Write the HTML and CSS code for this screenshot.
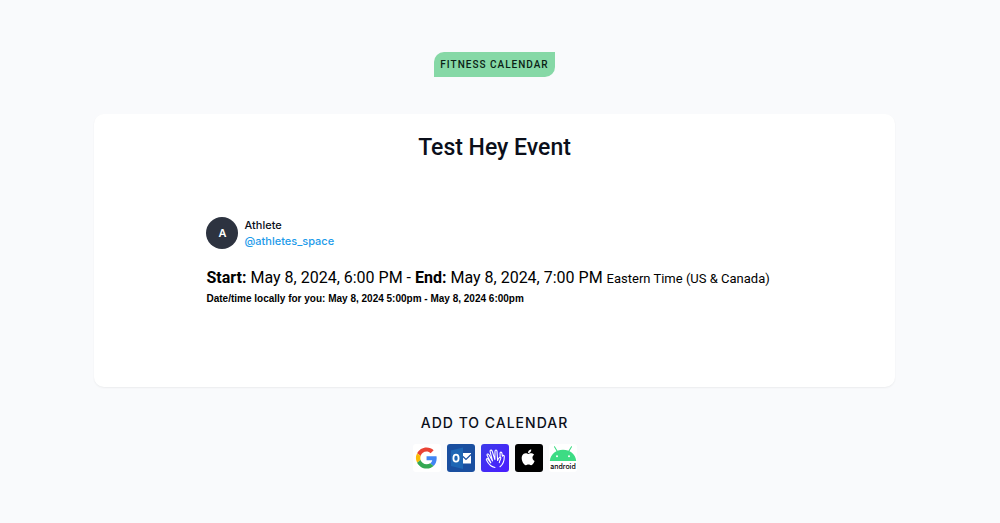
FILE: index.html
```html
<!DOCTYPE html>
<html lang="en">
<head>
<meta charset="utf-8">
<meta name="viewport" content="width=device-width, initial-scale=1">
<title>Test Hey Event</title>
<link rel="stylesheet" href="styles.css">
</head>
<body>
<main class="page">
  <a class="badge" href="#">FITNESS CALENDAR</a>
  <article class="card">
    <h1 class="title">Test Hey Event</h1>
    <div class="details">
      <div class="host">
        <span class="avatar">A</span>
        <div class="host-text">
          <span>Athlete</span>
          <a class="handle" href="#">@athletes_space</a>
        </div>
      </div>
      <p class="when"><strong>Start:</strong> May 8, 2024, 6:00 PM - <strong>End:</strong> May 8, 2024, 7:00 PM <span class="zone">Eastern Time (US &amp; Canada)</span></p>
      <p class="local">Date/time locally for you: May 8, 2024 5:00pm - May 8, 2024 6:00pm</p>
    </div>
  </article>
  <section class="add">
    <h2 class="add-title">ADD TO CALENDAR</h2>
    <div class="icons">
      <a class="icon" href="#" aria-label="Google">
        <svg viewBox="0 0 28 28"><rect width="28" height="28" fill="#fff"/><g transform="translate(3 3.400) scale(.44)"><path fill="#EA4335" d="M24 9.500c3.500 0 6.700 1.200 9.200 3.600l6.900-6.900C35.900 2.400 30.500 0 24 0 14.600 0 6.500 5.400 2.600 13.200l8 6.200C12.400 13.700 17.700 9.500 24 9.500z"/><path fill="#4285F4" d="M47 24.500c0-1.600-.2-3.100-.4-4.500H24v9h12.900c-.6 3-2.200 5.500-4.700 7.200l7.700 6C44.400 38 47 31.800 47 24.500z"/><path fill="#FBBC05" d="M10.500 28.600a14.500 14.500 0 0 1 0-9.200l-8-6.200a24 24 0 0 0 0 21.600z"/><path fill="#34A853" d="M24 48c6.500 0 11.900-2.100 15.900-5.800l-7.700-6c-2.200 1.500-4.900 2.300-8.200 2.300-6.300 0-11.600-4.200-13.500-9.900l-8 6.200C6.500 42.600 14.600 48 24 48z"/></g></svg>
      </a>
      <a class="icon" href="#" aria-label="Outlook">
        <svg viewBox="0 0 28 28"><rect width="28" height="28" fill="#1a4fa0"/><path fill="#1e66b4" d="M4 6.500 16 3.500v21.500L4 22z"/><path fill="#fff" d="M16 9h8v10.500h-8z"/><path d="m16 12.500 3 3 5-5" fill="none" stroke="#1a4fa0" stroke-width="1.200"/><ellipse cx="9" cy="14.200" rx="2.600" ry="3.500" fill="none" stroke="#fff" stroke-width="1.800"/></svg>
      </a>
      <a class="icon" href="#" aria-label="HEY">
        <svg viewBox="0 0 28 28"><defs><linearGradient id="hey" x1="0" y1="0" x2="1" y2="1"><stop offset="0" stop-color="#3d3bea"/><stop offset="1" stop-color="#4a1cff"/></linearGradient></defs><rect width="28" height="28" fill="url(#hey)"/><path fill="none" stroke="#fff" stroke-width="1.100" stroke-linecap="round" stroke-linejoin="round" d="M14 23.500c-4-.8-6.700-3.600-8.500-7.500-.6-1.400.9-1.900 1.700-.7l2.600 3.500-3.600-7.200c-.7-1.600 1-2.300 1.800-.8l3.500 6.100-2.400-9.300c-.3-1.700 1.500-2 2.100-.4l2.700 8.400.1-8.300c.1-1.700 1.900-1.600 2-.1l.6 9.300c.7-2.300 2.300-3.900 3.100-3.100.8.9-.9 2.400-1.400 5.200M19.200 12.500l-.2-3.200c.1-1.500 1.700-1.500 1.900-.1l.5 3.100c.3-1.300 1.900-1.300 1.900.2 0 4.500-1 7.800-4.300 10.200"/></svg>
      </a>
      <a class="icon" href="#" aria-label="Apple">
        <svg viewBox="0 0 28 28"><rect width="28" height="28" fill="#000"/><path transform="translate(5.500 5) scale(.7)" fill="#fff" d="M17.050 12.540c-.03-2.850 2.330-4.220 2.430-4.290-1.320-1.940-3.380-2.200-4.120-2.230-1.750-.18-3.420 1.030-4.310 1.030-.89 0-2.260-1.010-3.720-.98-1.910.03-3.670 1.110-4.660 2.820-1.990 3.450-.51 8.550 1.430 11.350.95 1.370 2.080 2.910 3.560 2.850 1.430-.06 1.970-.92 3.700-.92 1.720 0 2.210.92 3.720.89 1.540-.03 2.510-1.390 3.450-2.770 1.090-1.590 1.540-3.130 1.560-3.210-.03-.01-2.990-1.150-3.040-4.540zM14.200 4.170c.79-.96 1.320-2.280 1.180-3.610-1.140.05-2.520.76-3.330 1.710-.73.850-1.370 2.200-1.200 3.500 1.270.1 2.570-.65 3.350-1.600z"/></svg>
      </a>
      <a class="icon" href="#" aria-label="Android">
        <svg viewBox="0 0 28 28"><rect width="28" height="28" fill="#fff"/><path d="m5.500 2.800 3 5M22.500 2.800l-3 5" stroke="#3ddc84" stroke-width="1.100" stroke-linecap="round"/><path fill="#3ddc84" d="M.8 17C1.500 10.200 7 5.800 14 5.800S26.500 10.200 27.200 17z"/><circle cx="8" cy="12.300" r="1" fill="#fff"/><circle cx="20" cy="12.300" r="1" fill="#fff"/><text class="wordmark" x="14" y="25" text-anchor="middle">android</text></svg>
      </a>
    </div>
  </section>
</main>
</body>
</html>
```
FILE: styles.css
```css
* { box-sizing: border-box; }
body {
  margin: 0;
  background: #f9fafc;
  color: #0b0f1a;
  font-family: Inter, "Liberation Sans", sans-serif;
}
h1, h2, p { margin: 0; }
a { text-decoration: none; color: inherit; }
.page {
  display: flex;
  flex-direction: column;
  align-items: center;
  padding: 52px 11px 50px 0;
}
.badge {
  padding: 0 6px;
  border-radius: 10px 0;
  background: #86d8a6;
  color: #0b1f16;
  font-family: Roboto, "Liberation Sans", sans-serif;
  font-size: 10px;
  font-weight: 500;
  line-height: 25px;
  letter-spacing: 1px;
}
.card {
  width: 81%;
  margin-top: 37px;
  padding: 16px 16px 80px;
  border-radius: 10px;
  background: #fff;
  box-shadow: 0 1px 2px rgba(0, 0, 0, .06);
}
.title {
  font-family: Roboto, "Liberation Sans", sans-serif;
  font-size: 23px;
  font-weight: 500;
  line-height: 36px;
  text-align: center;
}
.details { width: 576px; max-width: 100%; margin: 51px auto 0; }
.host { display: flex; align-items: center; gap: 6px; }
.avatar {
  width: 32px;
  height: 32px;
  border-radius: 50%;
  background: #2d3340;
  color: #fff;
  font-size: 11px;
  font-weight: 600;
  line-height: 32px;
  text-align: center;
}
.host-text {
  display: flex;
  flex-direction: column;
  font-size: 11px;
  font-weight: 500;
  line-height: 16px;
}
.handle { color: #1d9bea; }
.when {
  margin-top: 17px;
  color: #000;
  font-family: Roboto, "Liberation Sans", sans-serif;
  font-size: 16px;
  line-height: 24px;
}
.when strong { font-weight: 700; }
.zone { font-size: 13px; }
.local {
  color: #000;
  font-family: "Liberation Sans", sans-serif;
  font-size: 10px;
  font-weight: 700;
  line-height: 16px;
}
.add { margin-top: 24px; text-align: center; }
.add-title {
  font-size: 14px;
  font-weight: 500;
  line-height: 24px;
  letter-spacing: 1px;
}
.icons { display: flex; justify-content: center; gap: 6px; margin-top: 9px; }
.icon {
  width: 28px;
  height: 28px;
  border-radius: 3px;
  overflow: hidden;
}
.icon svg { display: block; }
.wordmark { font-size: 7px; font-weight: 500; }
```
